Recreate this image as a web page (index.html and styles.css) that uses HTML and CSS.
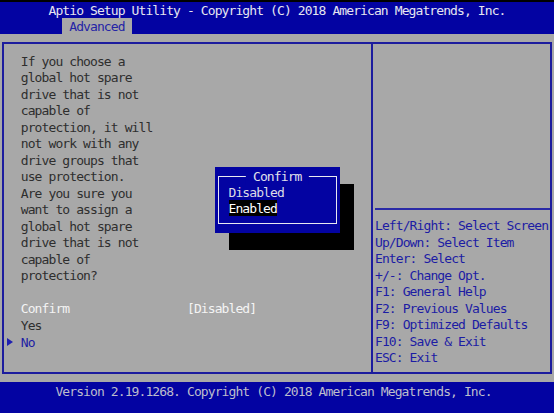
FILE: index.html
```html
<!DOCTYPE html>
<html lang="en">
<head>
<meta charset="utf-8">
<title>Aptio Setup Utility</title>
<link rel="stylesheet" href="styles.css">
</head>
<body>
<div class="screen">
  <div class="overscan"></div>
  <header class="top">
    <div class="title">Aptio Setup Utility - Copyright (C) 2018 American Megatrends, Inc.</div>
    <nav class="tabs"><span class="tab">Advanced</span></nav>
  </header>

  <main class="body">
    <div class="frame">
      <section class="pane-left">
        <div class="desc">If you choose a
global hot spare
drive that is not
capable of
protection, it will
not work with any
drive groups that
use protection.
Are you sure you
want to assign a
global hot spare
drive that is not
capable of
protection?</div>
        <div class="opts">
          <div class="opt opt-head"><span class="mark"></span><span>Confirm</span><span>[Disabled]</span></div>
          <div class="opt"><span class="mark"></span><span>Yes</span><span></span></div>
          <div class="opt opt-sel"><span class="mark"><svg class="arrow" width="6" height="8" viewBox="0 0 6 8"><path d="M0 0 L6 4 L0 8 Z"/></svg></span><span>No</span><span></span></div>
        </div>
      </section>
      <aside class="pane-right">
        <div class="help-rule"></div>
        <ul class="help">
          <li>Left/Right: Select Screen</li>
          <li>Up/Down: Select Item</li>
          <li>Enter: Select</li>
          <li>+/-: Change Opt.</li>
          <li>F1: General Help</li>
          <li>F2: Previous Values</li>
          <li>F9: Optimized Defaults</li>
          <li>F10: Save &amp; Exit</li>
          <li>ESC: Exit</li>
        </ul>
      </aside>
    </div>
  </main>

  <footer class="foot">Version 2.19.1268. Copyright (C) 2018 American Megatrends, Inc.</footer>

  <div class="dialog">
    <div class="dialog-frame">
      <span class="dialog-title">Confirm</span>
      <div class="choice">Disabled</div>
      <div class="choice"><span class="choice-hl">Enabled</span></div>
    </div>
  </div>
</div>
</body>
</html>
```

FILE: styles.css
```css
/* Text-mode setup screen: 80 x 25 character cells */
:root {
  --cw: 6.925px;      /* one character cell wide */
  --rh: 16.52px;      /* one text row high */
  --blue: #0303a2;
  --gray: #a8a8a8;
  --line: #1c1c9e;
  --ink: #2e2e2e;
  --ink-blue: #1c1ca4;
}

* { box-sizing: border-box; }

html, body {
  margin: 0;
  padding: 0;
  background: #000;
}

.screen {
  position: relative;
  width: 554px;
  height: 413px;
  overflow: hidden;
  display: flex;
  flex-direction: column;
  background: var(--gray);
  font-family: "DejaVu Sans Mono", "Liberation Mono", monospace;
  font-size: 13px;
  letter-spacing: -0.902px;
  line-height: var(--rh);
  white-space: nowrap;
}

.overscan {
  height: 2px;
  background: #000;
  flex: none;
}

/* Title bar with the page tabs */
.top {
  flex: none;
  height: 32px;
  background: var(--blue);
}

.title {
  height: 16px;
  line-height: 16px;
  padding-top: 1px;
  box-sizing: content-box;
  height: 15px;
  padding-left: calc(var(--cw) * 7);
  color: #e6e6f0;
}

.tabs {
  display: flex;
  height: 16px;
  padding-left: calc(var(--cw) * 9);
}

.tab {
  width: calc(var(--cw) * 10);
  padding-left: var(--cw);
  padding-top: 1px;
  line-height: 16px;
  background: var(--gray);
  color: #2424a6;
}

/* Main area: outlined box split into item list and help */
.body {
  flex: 1;
  min-height: 0;
  padding: 8px 2px;
}

.frame {
  height: 100%;
  display: flex;
  border: 2px solid var(--line);
}

.pane-left {
  width: 369px;
  flex: none;
  border-right: 2px solid var(--line);
  padding: 9.75px 0 0 2.925px;
}

.desc {
  margin-left: calc(var(--cw) * 2);
  color: var(--ink);
  white-space: pre;
}

.opts {
  margin-top: var(--rh);
}

.opt {
  display: grid;
  grid-template-columns: calc(var(--cw) * 2) calc(var(--cw) * 24) auto;
  height: var(--rh);
  color: var(--ink);
}

.opt-head { color: #f4f4f4; }
.opt-sel { color: var(--ink-blue); }

.mark {
  display: flex;
  align-items: center;
  padding-bottom: 1px;
}

.arrow { fill: #2020b0; }

.pane-right {
  flex: 1;
  padding: 164px 0 0 2px;
}

.help-rule {
  height: 1.5px;
  background: #2a2aa6;
}

.help {
  list-style: none;
  margin: 8.75px 0 0;
  padding: 0;
  color: var(--ink-blue);
}

.foot {
  flex: none;
  height: 31px;
  padding-left: calc(var(--cw) * 8);
  padding-top: 2px;
  background: var(--blue);
  color: #bdbdcc;
}

/* Popup question box with its drop shadow */
.dialog {
  position: absolute;
  left: 215px;
  top: 167px;
  width: 125px;
  height: 66px;
  padding: 9px 3.5px 9px 3px;
  background: var(--blue);
  box-shadow: 14px 17px 0 0 #000;
}

.dialog-frame {
  position: relative;
  height: 100%;
  border: 1.5px solid #e8e8f0;
  padding: 8px 0 0 9.5px;
}

.dialog-title {
  position: absolute;
  left: 50%;
  top: -8.5px;
  transform: translateX(-50%);
  padding: 0 var(--cw);
  background: var(--blue);
  color: #e0e0ea;
  line-height: 16px;
}

.choice {
  display: flex;
  height: var(--rh);
  color: #dcdce6;
}

.choice-hl {
  height: 16px;
  margin-top: -1.5px;
  padding-top: 1.5px;
  line-height: 14.5px;
  background: #000;
  color: #fff;
}
```
